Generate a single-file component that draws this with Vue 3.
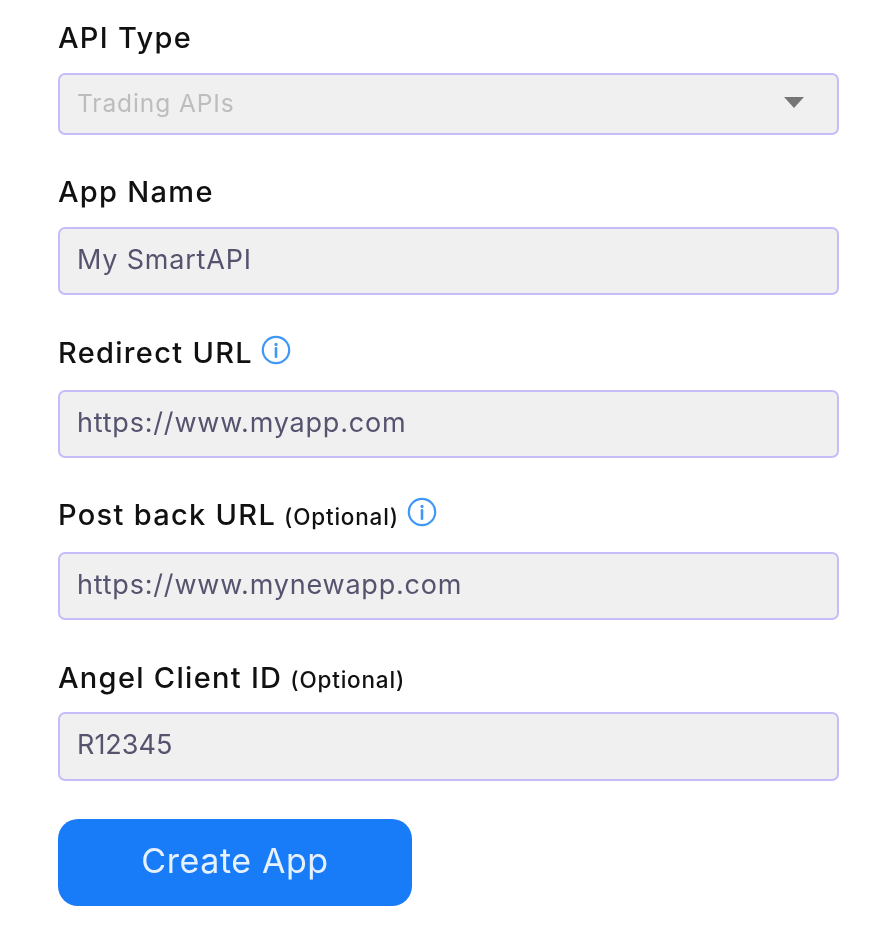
<script setup>
const fields = [
  { id: 'type', label: 'API Type', value: 'Trading APIs', select: true },
  { id: 'name', label: 'App Name', value: 'My SmartAPI' },
  { id: 'redirect', label: 'Redirect URL', value: 'https://www.myapp.com', info: true },
  { id: 'postback', label: 'Post back URL', optional: true, value: 'https://www.mynewapp.com', info: true },
  { id: 'client', label: 'Angel Client ID', optional: true, value: 'R12345' }
]
</script>

<template>
  <form class="form" @submit.prevent>
    <div v-for="f in fields" :key="f.id" class="field" :class="'field-' + f.id">
      <div class="label">
        <span>{{ f.label }}</span>
        <span v-if="f.optional" class="optional">(Optional)</span>
        <svg v-if="f.info" class="info" viewBox="0 0 30 30" fill="none">
          <circle cx="15" cy="15" r="13.2" stroke="#3f97f6" stroke-width="2.2" />
          <circle cx="15" cy="9.4" r="1.6" fill="#3f97f6" />
          <path d="M15 13.2v8.6" stroke="#3f97f6" stroke-width="2.6" stroke-linecap="round" />
        </svg>
      </div>
      <div class="control" :class="{ select: f.select }">
        <span>{{ f.value }}</span>
        <svg v-if="f.select" class="caret" viewBox="0 0 20 12"><path d="M0 0h20L10 11z" fill="#757575" /></svg>
      </div>
    </div>
    <button class="create" type="button">Create App</button>
  </form>
</template>

<style scoped>
.form {
  box-sizing: border-box;
  width: 883px;
  height: 929px;
  padding: 22px 44px 0 58px;
  background: #fff;
  font-family: "Inter", "Open Sans", sans-serif;
  filter: blur(0.7px);
}
.field { margin-bottom: 41px; }
.label {
  box-sizing: border-box;
  display: flex;
  align-items: center;
  height: 30px;
  padding-top: 1px;
  margin-bottom: 21px;
  font-size: 29px;
  font-weight: 500;
  letter-spacing: 1.3px;
  color: #111;
  white-space: pre;
}
.optional {
  margin-left: 8px;
  font-size: 22.5px;
  letter-spacing: 0.8px;
  position: relative;
  top: 2px;
}
.info { width: 30px; height: 30px; margin-left: 8px; position: relative; top: -3px; }
.control {
  box-sizing: border-box;
  display: flex;
  align-items: center;
  justify-content: space-between;
  height: 68px;
  padding: 0 33px 4px 17px;
  background: #f0f0f0;
  border: 2px solid #c6bcf8;
  border-radius: 7px;
  font-size: 27px;
  letter-spacing: 0.8px;
  color: #55536e;
}
.select { height: 62px; padding-bottom: 3px; font-size: 24.5px; letter-spacing: 0.9px; color: #bdbdbd; }
.caret { width: 20px; height: 12px; }
.field-name { margin-bottom: 42px; }
.field-postback { margin-bottom: 42px; }
.field-redirect .label, .field-postback .label { margin-bottom: 23px; }
.field-client { margin-bottom: 38px; }
.field-client .label { margin-bottom: 20px; }
.field-client .control { height: 69px; letter-spacing: 0; }
.create {
  display: block;
  width: 354px;
  height: 87px;
  padding: 0 0 4px;
  border: 0;
  border-radius: 20px;
  background: #187bf8;
  color: #e6f1ff;
  font-family: inherit;
  font-size: 34px;
  letter-spacing: 0.6px;
}
</style>
